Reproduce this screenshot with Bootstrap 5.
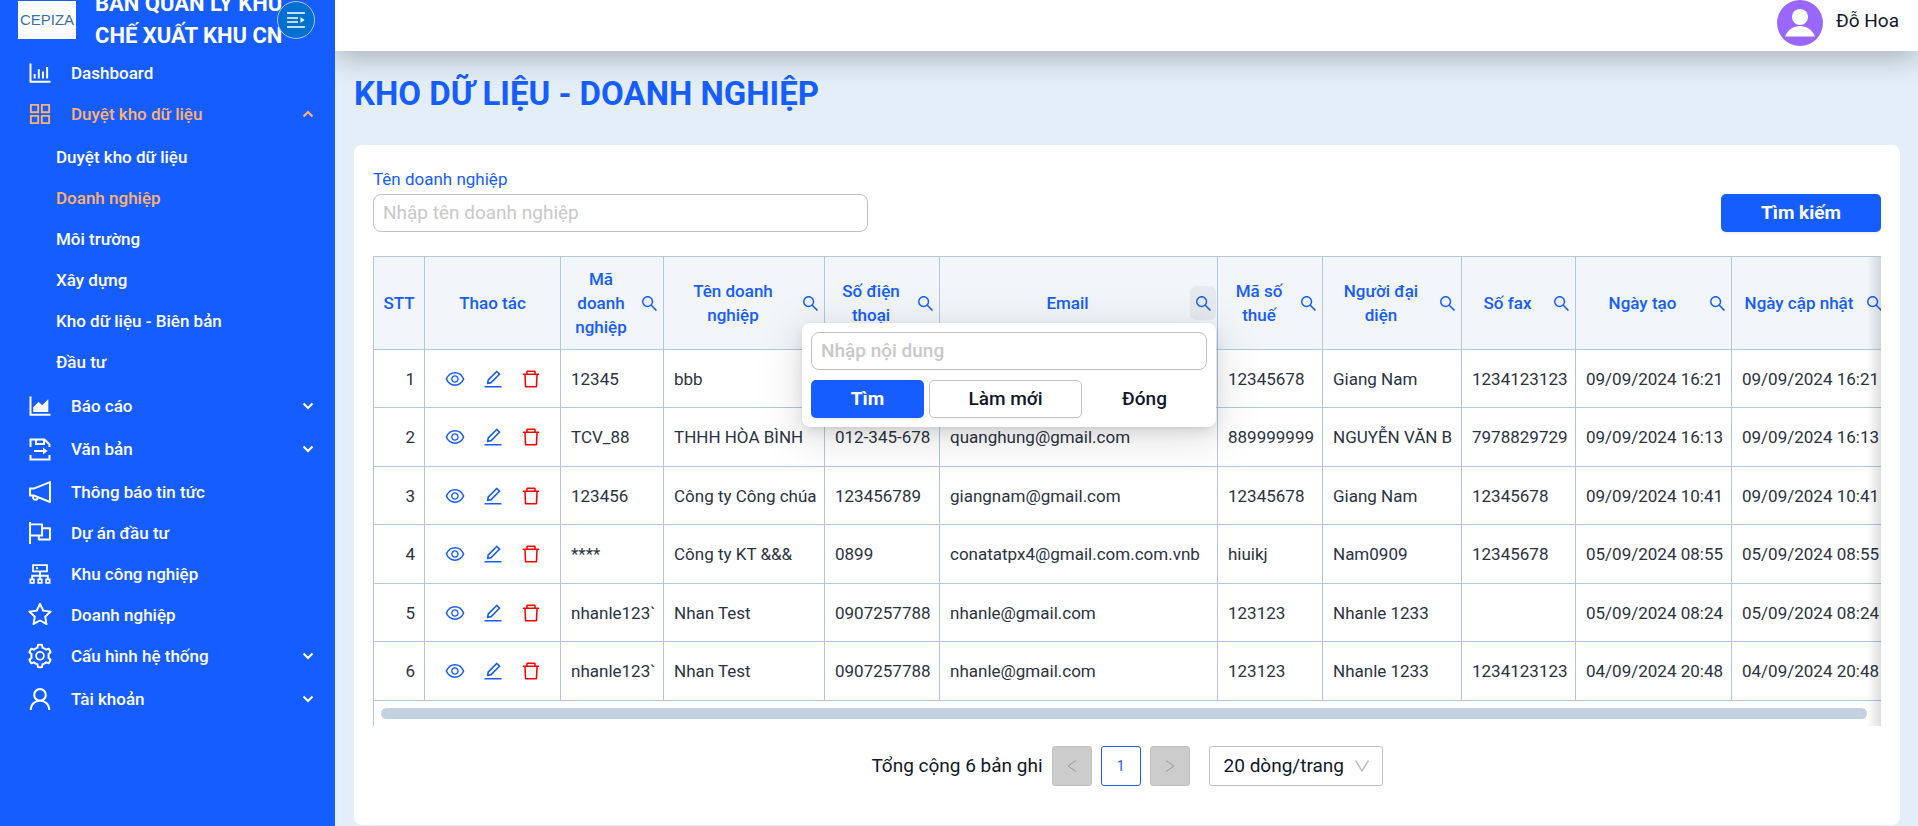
<!DOCTYPE html>
<html lang="vi">
<head>
<meta charset="utf-8">
<meta name="viewport" content="width=device-width, initial-scale=1">
<title>Kho dữ liệu - Doanh nghiệp</title>
<link rel="stylesheet" href="https://cdn.jsdelivr.net/npm/bootstrap@5.3.0/dist/css/bootstrap.min.css">
<style>
  :root { --brand: #165dff; --accent: #ffb26b; --line: #b0c9e0; --ink: #0f172a; }
  body { font-family: Roboto, "Liberation Sans", sans-serif; background: #e3eef8; color: var(--ink); font-size: 17px; line-height: 24px; }
  .ico { fill: currentColor; flex: none; display: block; }
  .ico-28 { width: 28px; height: 28px; }
  .ico-22 { width: 22px; height: 22px; }
  .ico-19 { width: 19px; height: 19px; }

  /* sidebar */
  .side { width: 335px; background: var(--brand); }
  .brand-bar { height: 52px; padding-left: 18px; gap: 19px; }
  .brand-logo { width: 58px; height: 38px; background: #fff; color: #3a70a8; font: 15px/38px "Liberation Sans", sans-serif; margin-top: 1px; }
  .brand-name { font-size: 22px; line-height: 32px; font-weight: 700; color: #fff; }
  .fold-btn { left: 277px; top: 1px; width: 38px; height: 38px; background: #0070d2; border: 1px solid #b4c3d6; color: #fff; }
  .side-link { height: 41px; padding: 0 19px 0 26px; gap: 17px; color: #fff; font-weight: 500; text-decoration: none; }
  .side-link.is-on { color: var(--accent); }
  .side-link.has-sub { margin-bottom: 2px; }
  .side-sub { margin-bottom: 3px; }
  .side-sub .side-link { padding-left: 56px; }

  /* top bar */
  .top-bar { height: 51px; padding: 0 19px 5px; gap: 13px; background: #fff; box-shadow: 0 6px 30px rgba(0,0,0,.27); }
  .avatar { width: 46px; height: 46px; flex: none; }
  .user-name { font-size: 19px; }

  .page-title { font-size: 33px; line-height: 40px; font-weight: 700; color: var(--brand); margin: 23px 19px 31px; }
  .panel { background: #fff; border-radius: 8px; margin: 0 18px 1px 19px; padding: 22px 19px 39px; }
  .search-row { --bs-gutter-x: 12px; margin-bottom: 24px; }
  .field-label { color: var(--brand); line-height: 24px; margin-bottom: 3px; }
  .field-box { height: 38px; border: 1px solid #bfbfc4; border-radius: 8px; padding: 0 9px 2px; font-size: 19px; color: var(--ink); }
  .field-box::placeholder { color: #c8c8c8; opacity: 1; }
  .act { height: 38px; font-size: 19px; line-height: 24px; padding: 0; border-radius: 5px; font-weight: 700; border: 1px solid transparent; color: var(--ink); }
  .act-main { background: var(--brand); color: #fff; box-shadow: 0 2px 2px rgba(0,0,0,.06); }
  .act-main:hover { background: #3d78ff; color: #fff; }
  .act-line { background: #fff; border-color: #c4c4c8; box-shadow: 0 2px 2px rgba(0,0,0,.03); }
  .act-wide { width: 160px; }

  /* data grid */
  .grid-wrap { border-left: 1px solid var(--line); border-top: 1px solid var(--line); overflow: hidden; }
  .grid-wrap::after { content: ""; position: absolute; top: 0; right: 0; bottom: 0; width: 14px; background: linear-gradient(to left, rgba(0,0,0,.13), transparent); pointer-events: none; }
  .grid { table-layout: fixed; width: 100%; min-width: 1515px; border-collapse: separate; border-spacing: 0; }
  .grid th, .grid td { border-right: 1px solid var(--line); border-bottom: 1px solid var(--line); }
  .grid th { height: 93px; padding: 0 1px 0 9px; background: #f2f5fa; color: var(--brand); font-weight: 500; text-align: center; vertical-align: middle; }
  .grid th.bare { padding: 0; }
  .grid td { height: 58px; padding: 0 9px 0 10px; color: #2a3342; white-space: nowrap; }
  .grid tr:nth-child(even) td { height: 59px; }
  .grid .icons { gap: 16px; }
  .filter-btn { width: 26px; height: 34px; border-radius: 6px; color: var(--brand); }
  .filter-btn.is-open { background: #e6e9ee; }
  .link-blue { color: var(--brand); }
  .link-red { color: #f00; }
  .scroll-rail { padding: 7px 14px 7px 7px; }
  .scroll-thumb { height: 11px; border-radius: 6px; background: #c4d1df; }

  .filter-pop { right: 0; top: 37px; width: 414px; padding: 9px; background: #fff; border-radius: 8px; z-index: 5; box-shadow: 0 6px 16px rgba(0,0,0,.1), 0 9px 44px 8px rgba(0,0,0,.09), 0 3px 6px -4px rgba(0,0,0,.14); }
  .filter-pop .field-box { margin-bottom: 10px; font-weight: 500; }
  .filter-pop .act { font-weight: 500; }
  .filter-pop .act-main { font-weight: 700; }
  .pop-acts { gap: 5px; }
  .w-find { width: 113px; } .w-reset { width: 153px; } .w-close { width: 115px; }

  /* pager */
  .pager { margin-top: 20px; gap: 9px; font-size: 19px; }
  .page-btn { width: 40px; height: 40px; border: 1px solid #c0c0c0; border-radius: 3px; background: #ccc; color: #999; padding: 0; font-size: 14px; }
  .page-btn.is-on { background: #fff; border-color: var(--brand); color: var(--brand); }
  .size-pick { width: 174px; height: 40px; margin-left: 10px; border: 1px solid #bfbfc4; border-radius: 3px; padding: 0 14px; font-size: 19px; color: var(--ink); background-color: #fff; appearance: none; }
  .size-caret { right: 13px; top: 12px; pointer-events: none; color: #bfbfbf; }
</style>
</head>
<body>
<svg class="d-none" aria-hidden="true">
  <symbol id="i-search" viewBox="0 0 1024 1024"><path d="M909.6 854.5L649.9 594.8C690.2 542.7 712 479 712 412c0-80.2-31.3-155.4-87.9-212.1-56.6-56.7-132-87.9-212.1-87.9s-155.5 31.3-212.1 87.9C143.2 256.5 112 331.8 112 412c0 80.1 31.3 155.5 87.9 212.1C256.5 680.8 331.8 712 412 712c67 0 130.6-21.8 182.7-62l259.7 259.6a8.2 8.2 0 0011.6 0l43.6-43.5a8.2 8.2 0 000-11.6zM570.4 570.4C528 612.7 471.8 636 412 636s-116-23.3-158.4-65.6C211.3 528 188 471.8 188 412s23.3-116.1 65.6-158.4C296 211.3 352.2 188 412 188s116.1 23.2 158.4 65.6S636 352.2 636 412s-23.3 116.1-65.6 158.4z"/></symbol>
  <symbol id="i-eye" viewBox="0 0 1024 1024"><path d="M942.2 486.2C847.4 286.5 704.1 186 512 186c-192.2 0-335.4 100.5-430.2 300.3a60.3 60.3 0 000 51.5C176.6 737.5 319.9 838 512 838c192.2 0 335.4-100.5 430.2-300.3 7.7-16.2 7.7-35 0-51.5zM512 766c-161.3 0-279.4-81.8-362.7-254C232.6 339.8 350.7 258 512 258c161.3 0 279.4 81.8 362.7 254C791.5 684.2 674.4 766 512 766zm-4-430c-97.2 0-176 78.8-176 176s78.8 176 176 176 176-78.8 176-176-78.8-176-176-176zm0 288c-61.9 0-112-50.1-112-112s50.1-112 112-112 112 50.1 112 112-50.1 112-112 112z"/></symbol>
  <symbol id="i-edit" viewBox="0 0 1024 1024"><path d="M257.7 752c2 0 4-.2 6-.5L431.9 722c2-.4 3.9-1.3 5.3-2.8l423.9-423.9a9.96 9.96 0 000-14.1L694.9 114.9c-1.9-1.9-4.4-2.9-7.1-2.9s-5.2 1-7.1 2.9L256.8 538.8c-1.5 1.5-2.4 3.3-2.8 5.3l-29.5 168.2a33.5 33.5 0 009.4 29.8c6.6 6.4 14.9 9.9 23.8 9.9zm67.4-174.4L687.8 215l73.3 73.3-362.7 362.6-88.9 15.7 15.6-89zM880 836H144c-17.7 0-32 14.3-32 32v36c0 4.4 3.6 8 8 8h784c4.4 0 8-3.6 8-8v-36c0-17.7-14.3-32-32-32z"/></symbol>
  <symbol id="i-del" viewBox="0 0 1024 1024"><path d="M360 184h-8c4.4 0 8-3.6 8-8v8h304v-8c0 4.4 3.6 8 8 8h-8v72h72v-80c0-35.3-28.7-64-64-64H352c-35.3 0-64 28.7-64 64v80h72v-72zm504 72H160c-17.7 0-32 14.3-32 32v32c0 4.4 3.6 8 8 8h60.4l24.7 523c1.6 34.1 29.8 61 63.9 61h454c34.2 0 62.3-26.8 63.9-61l24.7-523H888c4.4 0 8-3.6 8-8v-32c0-17.7-14.3-32-32-32zM731.3 840H292.7l-24.2-512h487l-24.2 512z"/></symbol>
  <symbol id="i-bar" viewBox="0 0 1024 1024"><path d="M888 792H200V168c0-4.4-3.6-8-8-8h-56c-4.4 0-8 3.6-8 8v688c0 4.4 3.6 8 8 8h752c4.4 0 8-3.6 8-8v-56c0-4.4-3.6-8-8-8zm-600-80h56c4.4 0 8-3.6 8-8V560c0-4.4-3.6-8-8-8h-56c-4.4 0-8 3.6-8 8v144c0 4.4 3.6 8 8 8zm152 0h56c4.4 0 8-3.6 8-8V384c0-4.4-3.6-8-8-8h-56c-4.4 0-8 3.6-8 8v320c0 4.4 3.6 8 8 8zm152 0h56c4.4 0 8-3.6 8-8V462c0-4.4-3.6-8-8-8h-56c-4.4 0-8 3.6-8 8v242c0 4.4 3.6 8 8 8zm152 0h56c4.4 0 8-3.6 8-8V304c0-4.4-3.6-8-8-8h-56c-4.4 0-8 3.6-8 8v400c0 4.4 3.6 8 8 8z"/></symbol>
  <symbol id="i-app" viewBox="0 0 1024 1024"><path d="M464 144H160c-8.800 0-16 7.200-16 16v304c0 8.800 7.200 16 16 16h304c8.800 0 16-7.200 16-16V160c0-8.800-7.200-16-16-16zm-52 268H212V212h200v200zm452-268H560c-8.800 0-16 7.200-16 16v304c0 8.800 7.200 16 16 16h304c8.800 0 16-7.200 16-16V160c0-8.800-7.200-16-16-16zm-52 268H612V212h200v200zM464 544H160c-8.800 0-16 7.200-16 16v304c0 8.800 7.200 16 16 16h304c8.800 0 16-7.200 16-16V560c0-8.800-7.200-16-16-16zm-52 268H212V612h200v200zm452-268H560c-8.800 0-16 7.200-16 16v304c0 8.800 7.200 16 16 16h304c8.800 0 16-7.200 16-16V560c0-8.800-7.200-16-16-16zm-52 268H612V612h200v200z"/></symbol>
  <symbol id="i-area" viewBox="0 0 1024 1024"><path d="M888 792H200V168c0-4.4-3.6-8-8-8h-56c-4.4 0-8 3.6-8 8v688c0 4.4 3.6 8 8 8h752c4.4 0 8-3.6 8-8v-56c0-4.400-3.600-8-8-8zm-616-64h536c4.4 0 8-3.6 8-8V284c0-7.200-8.700-10.700-13.700-5.700L592 488.600l-125.400-124a8.030 8.030 0 00-11.300 0l-189 189.600a7.870 7.870 0 00-2.300 5.600V720c0 4.400 3.600 8 8 8z"/></symbol>
  <symbol id="i-doc" viewBox="0 0 28 28"><g fill="none" stroke="currentColor" stroke-width="2"><path d="M4.500 12V4.500H18.500L23.500 9.500V12M10 4.500V9H18V4.500M4.500 20V24.500H23.500V20"/><path d="M8 16H18"/></g><path d="M17 12.500L21.500 16L17 19.500Z"/></symbol>
  <symbol id="i-horn" viewBox="0 0 1024 1024"><path d="M880 112c-3.800 0-7.700.7-11.600 2.300L292 345.900H128c-8.800 0-16 7.400-16 16.600v299c0 9.200 7.200 16.600 16 16.600h101.700c-3.700 11.600-5.700 23.900-5.700 36.400 0 65.900 53.800 119.500 120 119.500 55.400 0 102.100-37.600 115.900-88.400l408.600 164.200c3.900 1.500 7.800 2.300 11.600 2.300 16.900 0 32-14.200 32-33.200V145.200C912 126.200 897 112 880 112zM344 762.300c-26.500 0-48-21.400-48-47.800 0-11.200 3.900-21.900 11-30.400l84.900 34.100c-2 24.600-22.700 44.100-47.900 44.100zm496 58.400L318.800 611.300l-12.900-5.200H184V417.900h121.900l12.900-5.200L840 203.300v617.400z"/></symbol>
  <symbol id="i-flag" viewBox="0 0 1024 1024"><path d="M880 305H624V192c0-17.700-14.300-32-32-32H184v-40c0-4.400-3.600-8-8-8h-56c-4.400 0-8 3.600-8 8v784c0 4.400 3.600 8 8 8h56c4.400 0 8-3.600 8-8V640h248v113c0 17.700 14.300 32 32 32h416c17.700 0 32-14.300 32-32V337c0-17.700-14.300-32-32-32zM184 568V232h368v336H184zm656 145H504v-73h112c4.400 0 8-3.600 8-8V377h216v336z"/></symbol>
  <symbol id="i-cluster" viewBox="0 0 1024 1024"><path d="M888 680h-54V540H546v-92h238c8.800 0 16-7.200 16-16V168c0-8.800-7.200-16-16-16H240c-8.800 0-16 7.200-16 16v264c0 8.800 7.200 16 16 16h238v92H190v140h-54c-4.400 0-8 3.600-8 8v176c0 4.400 3.600 8 8 8h176c4.400 0 8-3.600 8-8V688c0-4.400-3.600-8-8-8h-54v-72h220v72h-54c-4.400 0-8 3.600-8 8v176c0 4.400 3.600 8 8 8h176c4.400 0 8-3.600 8-8V688c0-4.400-3.600-8-8-8h-54v-72h220v72h-54c-4.400 0-8 3.600-8 8v176c0 4.400 3.600 8 8 8h176c4.400 0 8-3.600 8-8V688c0-4.400-3.600-8-8-8zM256 805.300c0 1.500-1.200 2.700-2.700 2.700h-58.700c-1.500 0-2.700-1.200-2.700-2.700v-58.700c0-1.500 1.200-2.700 2.700-2.700h58.700c1.500 0 2.700 1.200 2.700 2.700v58.700zm288 0c0 1.500-1.200 2.700-2.700 2.700h-58.700c-1.500 0-2.700-1.200-2.700-2.700v-58.700c0-1.500 1.200-2.700 2.700-2.700h58.700c1.500 0 2.700 1.200 2.700 2.700v58.700zM288 384V216h448v168H288zm544 421.300c0 1.500-1.200 2.700-2.700 2.700h-58.700c-1.500 0-2.700-1.200-2.700-2.700v-58.700c0-1.500 1.200-2.700 2.700-2.700h58.700c1.500 0 2.700 1.200 2.700 2.700v58.700zM360 300a40 40 0 1080 0 40 40 0 10-80 0z"/></symbol>
  <symbol id="i-star" viewBox="0 0 1024 1024"><path d="M908.100 353.100l-253.900-36.900L540.700 86.100c-3.100-6.300-8.200-11.400-14.500-14.500-15.800-7.800-35-1.300-42.900 14.500L369.800 316.200l-253.900 36.900c-7 1-13.400 4.300-18.300 9.300a32.050 32.050 0 00.6 45.300l183.700 179.100-43.400 252.900a31.950 31.950 0 0046.400 33.700L512 754l227.100 119.400c6.200 3.300 13.400 4.400 20.300 3.200 17.400-3 29.100-19.500 26.100-36.900l-43.400-252.900 183.700-179.100c5-4.900 8.300-11.300 9.300-18.300 2.700-17.500-9.500-33.700-27-36.300zM664.800 561.600l36.100 210.300L512 672.700 323.100 772l36.100-210.300-152.800-149L417.600 382 512 190.700 606.400 382l211.200 30.700-152.800 148.900z"/></symbol>
  <symbol id="i-gear" viewBox="0 0 1024 1024"><path d="M924.8 625.7l-65.500-56c3.100-19 4.700-38.400 4.700-57.800s-1.600-38.800-4.700-57.800l65.500-56a32.030 32.030 0 009.300-35.200l-.9-2.600a443.740 443.740 0 00-79.700-137.900l-1.800-2.100a32.120 32.120 0 00-35.100-9.500l-81.300 28.900c-30-24.600-63.500-44-99.700-57.600l-15.700-85a32.050 32.050 0 00-25.800-25.700l-2.700-.5c-52.100-9.400-106.900-9.400-159 0l-2.700.5a32.050 32.050 0 00-25.800 25.700l-15.800 85.400a351.860 351.860 0 00-99 57.400l-81.900-29.100a32 32 0 00-35.100 9.500l-1.800 2.100a446.020 446.020 0 00-79.700 137.900l-.9 2.600c-4.500 12.500-.8 26.500 9.300 35.200l66.300 56.600c-3.100 18.800-4.600 38-4.600 57.100 0 19.200 1.500 38.400 4.600 57.100L99 625.500a32.030 32.030 0 00-9.300 35.200l.9 2.600c18.100 50.400 44.900 96.900 79.700 137.900l1.800 2.100a32.120 32.120 0 0035.100 9.500l81.900-29.100c29.800 24.500 63.100 43.900 99 57.400l15.800 85.400a32.050 32.050 0 0025.800 25.700l2.700.5a449.400 449.400 0 00159 0l2.700-.5a32.050 32.050 0 0025.800-25.700l15.700-85a350 350 0 0099.700-57.600l81.300 28.900a32 32 0 0035.100-9.500l1.800-2.100c34.800-41.100 61.600-87.500 79.700-137.900l.9-2.600c4.500-12.300.8-26.300-9.300-35zM788.300 465.900c2.500 15.100 3.800 30.600 3.800 46.100s-1.300 31-3.800 46.100l-6.600 40.100 74.700 63.900a370.030 370.030 0 01-42.600 73.600L721 702.800l-31.400 25.800c-23.900 19.600-50.500 35-79.300 45.800l-38.100 14.300-17.900 97a377.500 377.500 0 01-85 0l-17.900-97.200-37.800-14.500c-28.500-10.800-55-26.200-78.700-45.700l-31.400-25.900-93.400 33.200c-17-22.900-31.200-47.600-42.600-73.600l75.500-64.500-6.500-40c-2.400-14.900-3.700-30.300-3.700-45.500 0-15.300 1.200-30.600 3.700-45.500l6.500-40-75.500-64.500c11.300-26.100 25.600-50.700 42.600-73.600l93.400 33.200 31.400-25.900c23.700-19.500 50.200-34.900 78.700-45.700l37.900-14.300 17.900-97.200c28.100-3.200 56.800-3.200 85 0l17.900 97 38.100 14.300c28.700 10.800 55.400 26.200 79.300 45.800l31.400 25.800 92.800-32.900c17 22.900 31.200 47.600 42.600 73.600L781.800 426l6.500 39.900zM512 326c-97.200 0-176 78.800-176 176s78.800 176 176 176 176-78.800 176-176-78.800-176-176-176zm79.200 255.200A111.600 111.600 0 01512 614c-29.900 0-58-11.700-79.200-32.800A111.600 111.600 0 01400 502c0-29.900 11.700-58 32.800-79.200C454 401.600 482.100 390 512 390c29.900 0 58 11.600 79.200 32.800A111.600 111.600 0 01624 502c0 29.900-11.700 58-32.800 79.200z"/></symbol>
  <symbol id="i-user" viewBox="0 0 1024 1024"><path d="M858.500 763.600a374 374 0 00-80.600-119.500 375.630 375.630 0 00-119.500-80.600c-.4-.2-.8-.3-1.200-.5C719.500 518 760 444.700 760 362c0-137-111-248-248-248S264 225 264 362c0 82.700 40.500 156 102.800 201.100-.4.2-.8.3-1.200.5-44.800 18.900-85 46-119.500 80.600a375.630 375.630 0 00-80.600 119.500A371.700 371.700 0 00136 901.800a8 8 0 008 8.200h60c4.400 0 7.900-3.500 8-7.800 2-77.200 33-149.500 87.800-204.300 56.700-56.700 132-87.900 212.200-87.900s155.500 31.200 212.200 87.900C779 752.700 810 825 812 902.200c.1 4.400 3.600 7.800 8 7.800h60a8 8 0 008-8.200c-1-47.800-10.900-94.300-29.500-138.200zM512 534c-45.900 0-89.100-17.900-121.600-50.400S340 407.900 340 362c0-45.900 17.900-89.100 50.400-121.600S466.100 190 512 190s89.100 17.900 121.600 50.400S684 316.100 684 362c0 45.900-17.900 89.100-50.400 121.600S557.900 534 512 534z"/></symbol>
  <symbol id="i-down" viewBox="0 0 16 16"><path d="M3.500 5.500L8 10L12.500 5.500" fill="none" stroke="currentColor" stroke-width="2"/></symbol>
  <symbol id="i-up" viewBox="0 0 16 16"><path d="M3.500 10.500L8 6L12.500 10.500" fill="none" stroke="currentColor" stroke-width="2"/></symbol>
</svg>

<div class="d-flex min-vh-100">
  <aside class="side flex-shrink-0 position-relative">
    <div class="brand-bar d-flex">
      <div class="brand-logo flex-shrink-0 text-center">CEPIZA</div>
      <div class="brand-name d-flex align-items-end h-100 text-nowrap"><span>BAN QUẢN LÝ KHU<br>CHẾ XUẤT KHU CN</span></div>
    </div>
    <button type="button" class="fold-btn position-absolute rounded-circle p-0 d-flex align-items-center justify-content-center" aria-label="Thu gọn menu">
      <svg width="20" height="20" viewBox="0 0 20 20"><path d="M1 3H19M1 8H12M1 12H12M1 17H19" stroke="currentColor" stroke-width="1.500" fill="none"/><path d="M14.500 7L18.500 10L14.500 13Z" fill="currentColor"/></svg>
    </button>
    <nav aria-label="Menu chính">
      <ul class="list-unstyled m-0">
        <li><a href="#" class="side-link d-flex align-items-center"><svg class="ico ico-28"><use href="#i-bar"/></svg>Dashboard</a></li>
        <li>
          <a href="#" class="side-link has-sub is-on d-flex align-items-center"><svg class="ico ico-28"><use href="#i-app"/></svg><span class="flex-fill">Duyệt kho dữ liệu</span><svg class="ico" width="16" height="16"><use href="#i-up"/></svg></a>
          <ul class="side-sub list-unstyled">
            <li><a href="#" class="side-link d-flex align-items-center">Duyệt kho dữ liệu</a></li>
            <li><a href="#" class="side-link is-on d-flex align-items-center">Doanh nghiệp</a></li>
            <li><a href="#" class="side-link d-flex align-items-center">Môi trường</a></li>
            <li><a href="#" class="side-link d-flex align-items-center">Xây dựng</a></li>
            <li><a href="#" class="side-link d-flex align-items-center">Kho dữ liệu - Biên bản</a></li>
            <li><a href="#" class="side-link d-flex align-items-center">Đầu tư</a></li>
          </ul>
        </li>
        <li><a href="#" class="side-link has-sub d-flex align-items-center"><svg class="ico ico-28"><use href="#i-area"/></svg><span class="flex-fill">Báo cáo</span><svg class="ico" width="16" height="16"><use href="#i-down"/></svg></a></li>
        <li><a href="#" class="side-link has-sub d-flex align-items-center"><svg class="ico ico-28"><use href="#i-doc"/></svg><span class="flex-fill">Văn bản</span><svg class="ico" width="16" height="16"><use href="#i-down"/></svg></a></li>
        <li><a href="#" class="side-link d-flex align-items-center"><svg class="ico ico-28"><use href="#i-horn"/></svg>Thông báo tin tức</a></li>
        <li><a href="#" class="side-link d-flex align-items-center"><svg class="ico ico-28"><use href="#i-flag"/></svg>Dự án đầu tư</a></li>
        <li><a href="#" class="side-link d-flex align-items-center"><svg class="ico ico-28"><use href="#i-cluster"/></svg>Khu công nghiệp</a></li>
        <li><a href="#" class="side-link d-flex align-items-center"><svg class="ico ico-28"><use href="#i-star"/></svg>Doanh nghiệp</a></li>
        <li><a href="#" class="side-link has-sub d-flex align-items-center"><svg class="ico ico-28"><use href="#i-gear"/></svg><span class="flex-fill">Cấu hình hệ thống</span><svg class="ico" width="16" height="16"><use href="#i-down"/></svg></a></li>
        <li><a href="#" class="side-link has-sub d-flex align-items-center"><svg class="ico ico-28"><use href="#i-user"/></svg><span class="flex-fill">Tài khoản</span><svg class="ico" width="16" height="16"><use href="#i-down"/></svg></a></li>
      </ul>
    </nav>
  </aside>

  <div class="d-flex flex-column flex-fill overflow-hidden">
    <header class="top-bar d-flex align-items-center justify-content-end">
      <svg class="avatar" viewBox="0 0 46 46"><circle cx="23" cy="23" r="23" fill="#96f"/><circle cx="23" cy="17" r="8" fill="#fff"/><path d="M8 36.500C11 29.500 16.500 26 23 26S35 29.500 38 36.500Z" fill="#fff"/></svg>
      <span class="user-name pb-1">Đỗ Hoa</span>
    </header>

    <h1 class="page-title">KHO DỮ LIỆU - DOANH NGHIỆP</h1>

    <main class="panel flex-fill">
      <form class="search-row row align-items-end justify-content-between">
        <div class="col-4">
          <label for="ten" class="field-label d-block">Tên doanh nghiệp</label>
          <input id="ten" type="text" class="field-box w-100 d-block" placeholder="Nhập tên doanh nghiệp">
        </div>
        <div class="col-auto">
          <button type="button" class="btn act act-main act-wide d-block">Tìm kiếm</button>
        </div>
      </form>

      <div class="grid-wrap position-relative">
        <table class="grid">
          <colgroup>
            <col style="width:51px"><col style="width:136px"><col style="width:103px"><col style="width:161px"><col style="width:115px"><col style="width:278px"><col style="width:105px"><col style="width:139px"><col style="width:114px"><col style="width:156px"><col style="width:157px">
          </colgroup>
          <thead>
            <tr>
              <th class="bare">STT</th>
              <th class="bare">Thao tác</th>
              <th><div class="d-flex align-items-center"><span class="flex-fill me-1">Mã doanh nghiệp</span><button type="button" class="filter-btn btn p-0 border-0 d-flex align-items-center justify-content-center flex-shrink-0" aria-label="Lọc mã doanh nghiệp"><svg class="ico ico-19"><use href="#i-search"/></svg></button></div></th>
              <th><div class="d-flex align-items-center"><span class="flex-fill me-1">Tên doanh nghiệp</span><button type="button" class="filter-btn btn p-0 border-0 d-flex align-items-center justify-content-center flex-shrink-0" aria-label="Lọc tên doanh nghiệp"><svg class="ico ico-19"><use href="#i-search"/></svg></button></div></th>
              <th><div class="d-flex align-items-center"><span class="flex-fill me-1">Số điện thoại</span><button type="button" class="filter-btn btn p-0 border-0 d-flex align-items-center justify-content-center flex-shrink-0" aria-label="Lọc số điện thoại"><svg class="ico ico-19"><use href="#i-search"/></svg></button></div></th>
              <th><div class="d-flex align-items-center"><span class="flex-fill me-1">Email</span>
                <div class="position-relative flex-shrink-0">
                  <button type="button" class="filter-btn is-open btn p-0 border-0 d-flex align-items-center justify-content-center" aria-label="Lọc email" aria-expanded="true"><svg class="ico ico-19"><use href="#i-search"/></svg></button>
                  <div class="filter-pop position-absolute">
                    <input type="text" class="field-box w-100 d-block" placeholder="Nhập nội dung" aria-label="Nội dung email">
                    <div class="pop-acts d-flex">
                      <button type="button" class="btn act act-main w-find">Tìm</button>
                      <button type="button" class="btn act act-line w-reset">Làm mới</button>
                      <button type="button" class="btn act w-close">Đóng</button>
                    </div>
                  </div>
                </div></div></th>
              <th><div class="d-flex align-items-center"><span class="flex-fill me-1">Mã số thuế</span><button type="button" class="filter-btn btn p-0 border-0 d-flex align-items-center justify-content-center flex-shrink-0" aria-label="Lọc mã số thuế"><svg class="ico ico-19"><use href="#i-search"/></svg></button></div></th>
              <th><div class="d-flex align-items-center"><span class="flex-fill me-1">Người đại diện</span><button type="button" class="filter-btn btn p-0 border-0 d-flex align-items-center justify-content-center flex-shrink-0" aria-label="Lọc người đại diện"><svg class="ico ico-19"><use href="#i-search"/></svg></button></div></th>
              <th><div class="d-flex align-items-center"><span class="flex-fill me-1">Số fax</span><button type="button" class="filter-btn btn p-0 border-0 d-flex align-items-center justify-content-center flex-shrink-0" aria-label="Lọc số fax"><svg class="ico ico-19"><use href="#i-search"/></svg></button></div></th>
              <th><div class="d-flex align-items-center"><span class="flex-fill me-1">Ngày tạo</span><button type="button" class="filter-btn btn p-0 border-0 d-flex align-items-center justify-content-center flex-shrink-0" aria-label="Lọc ngày tạo"><svg class="ico ico-19"><use href="#i-search"/></svg></button></div></th>
              <th><div class="d-flex align-items-center"><span class="flex-fill me-1 text-nowrap">Ngày cập nhật</span><button type="button" class="filter-btn btn p-0 border-0 d-flex align-items-center justify-content-center flex-shrink-0" aria-label="Lọc ngày cập nhật"><svg class="ico ico-19"><use href="#i-search"/></svg></button></div></th>
            </tr>
          </thead>
          <tbody>
            <tr><td class="text-end">1</td><td><div class="icons d-flex justify-content-center"><a href="#" class="link-blue" aria-label="Xem"><svg class="ico ico-22"><use href="#i-eye"/></svg></a><a href="#" class="link-blue" aria-label="Sửa"><svg class="ico ico-22"><use href="#i-edit"/></svg></a><a href="#" class="link-red" aria-label="Xóa"><svg class="ico ico-22"><use href="#i-del"/></svg></a></div></td><td>12345</td><td>bbb</td><td></td><td></td><td>12345678</td><td>Giang Nam</td><td>1234123123</td><td>09/09/2024 16:21</td><td>09/09/2024 16:21</td></tr>
            <tr><td class="text-end">2</td><td><div class="icons d-flex justify-content-center"><a href="#" class="link-blue" aria-label="Xem"><svg class="ico ico-22"><use href="#i-eye"/></svg></a><a href="#" class="link-blue" aria-label="Sửa"><svg class="ico ico-22"><use href="#i-edit"/></svg></a><a href="#" class="link-red" aria-label="Xóa"><svg class="ico ico-22"><use href="#i-del"/></svg></a></div></td><td>TCV_88</td><td>THHH HÒA BÌNH</td><td>012-345-678</td><td>quanghung@gmail.com</td><td>889999999</td><td>NGUYỄN VĂN B</td><td>7978829729</td><td>09/09/2024 16:13</td><td>09/09/2024 16:13</td></tr>
            <tr><td class="text-end">3</td><td><div class="icons d-flex justify-content-center"><a href="#" class="link-blue" aria-label="Xem"><svg class="ico ico-22"><use href="#i-eye"/></svg></a><a href="#" class="link-blue" aria-label="Sửa"><svg class="ico ico-22"><use href="#i-edit"/></svg></a><a href="#" class="link-red" aria-label="Xóa"><svg class="ico ico-22"><use href="#i-del"/></svg></a></div></td><td>123456</td><td>Công ty Công chúa</td><td>123456789</td><td>giangnam@gmail.com</td><td>12345678</td><td>Giang Nam</td><td>12345678</td><td>09/09/2024 10:41</td><td>09/09/2024 10:41</td></tr>
            <tr><td class="text-end">4</td><td><div class="icons d-flex justify-content-center"><a href="#" class="link-blue" aria-label="Xem"><svg class="ico ico-22"><use href="#i-eye"/></svg></a><a href="#" class="link-blue" aria-label="Sửa"><svg class="ico ico-22"><use href="#i-edit"/></svg></a><a href="#" class="link-red" aria-label="Xóa"><svg class="ico ico-22"><use href="#i-del"/></svg></a></div></td><td>****</td><td>Công ty KT &amp;&amp;&amp;</td><td>0899</td><td>conatatpx4@gmail.com.com.vnb</td><td>hiuikj</td><td>Nam0909</td><td>12345678</td><td>05/09/2024 08:55</td><td>05/09/2024 08:55</td></tr>
            <tr><td class="text-end">5</td><td><div class="icons d-flex justify-content-center"><a href="#" class="link-blue" aria-label="Xem"><svg class="ico ico-22"><use href="#i-eye"/></svg></a><a href="#" class="link-blue" aria-label="Sửa"><svg class="ico ico-22"><use href="#i-edit"/></svg></a><a href="#" class="link-red" aria-label="Xóa"><svg class="ico ico-22"><use href="#i-del"/></svg></a></div></td><td>nhanle123`</td><td>Nhan Test</td><td>0907257788</td><td>nhanle@gmail.com</td><td>123123</td><td>Nhanle 1233</td><td></td><td>05/09/2024 08:24</td><td>05/09/2024 08:24</td></tr>
            <tr><td class="text-end">6</td><td><div class="icons d-flex justify-content-center"><a href="#" class="link-blue" aria-label="Xem"><svg class="ico ico-22"><use href="#i-eye"/></svg></a><a href="#" class="link-blue" aria-label="Sửa"><svg class="ico ico-22"><use href="#i-edit"/></svg></a><a href="#" class="link-red" aria-label="Xóa"><svg class="ico ico-22"><use href="#i-del"/></svg></a></div></td><td>nhanle123`</td><td>Nhan Test</td><td>0907257788</td><td>nhanle@gmail.com</td><td>123123</td><td>Nhanle 1233</td><td>1234123123</td><td>04/09/2024 20:48</td><td>04/09/2024 20:48</td></tr>
          </tbody>
        </table>
        <div class="scroll-rail"><div class="scroll-thumb"></div></div>
      </div>

      <div class="pager d-flex align-items-center justify-content-center">
        <span>Tổng cộng 6 bản ghi</span>
        <button type="button" class="page-btn d-flex align-items-center justify-content-center" disabled aria-label="Trang trước"><svg width="16" height="16" viewBox="0 0 16 16"><path d="M12 2.500L4 8L12 13.500" fill="none" stroke="currentColor"/></svg></button>
        <button type="button" class="page-btn is-on">1</button>
        <button type="button" class="page-btn d-flex align-items-center justify-content-center" disabled aria-label="Trang sau"><svg width="16" height="16" viewBox="0 0 16 16"><path d="M4 2.500L12 8L4 13.500" fill="none" stroke="currentColor"/></svg></button>
        <div class="position-relative">
          <select class="size-pick d-block" aria-label="Số dòng mỗi trang"><option>20 dòng/trang</option><option>50 dòng/trang</option></select>
          <svg class="size-caret position-absolute" width="16" height="16" viewBox="0 0 16 16"><path d="M1.500 2.500L8 13L14.500 2.500" fill="none" stroke="currentColor" stroke-width="1.500"/></svg>
        </div>
      </div>
    </main>
  </div>
</div>
<script src="https://cdn.jsdelivr.net/npm/bootstrap@5.3.0/dist/js/bootstrap.bundle.min.js"></script>
</body>
</html>
